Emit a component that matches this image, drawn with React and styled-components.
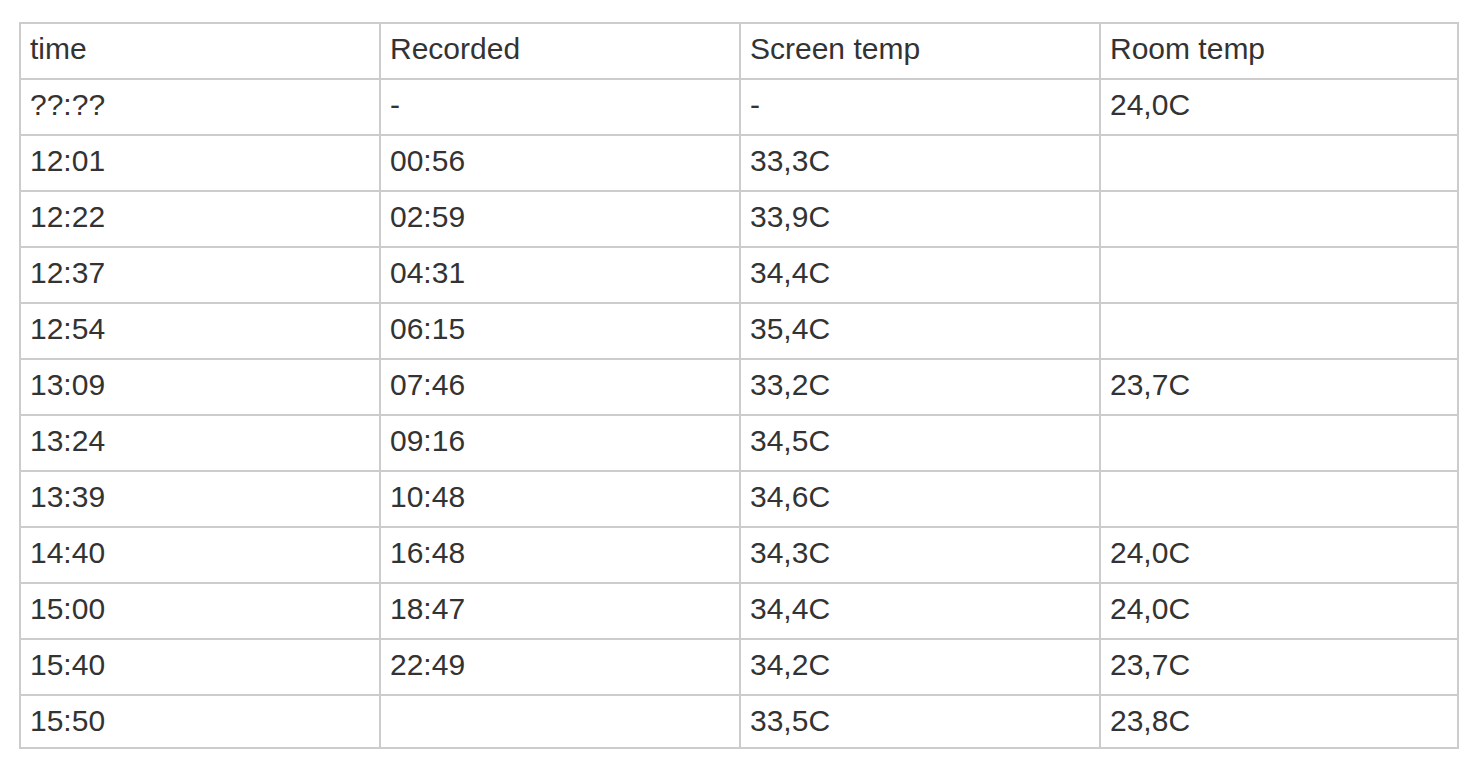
import React from 'react';
import styled, { createGlobalStyle } from 'styled-components';

const GlobalStyle = createGlobalStyle`
  html, body {
    margin: 0;
    padding: 0;
    background: #ffffff;
  }
  body {
    font-family: "Liberation Sans", Arial, sans-serif;
    color: #333333;
  }
`;

const Page = styled.div`
  padding: 22px 0 0 19px;
`;

const Table = styled.table`
  width: 1440px;
  table-layout: fixed;
  border-collapse: separate;
  border-spacing: 0;
  border-top: 2px solid #cccccc;
  border-left: 2px solid #cccccc;
  font-size: 30px;
  line-height: 36px;
`;

const HeadCell = styled.th`
  box-sizing: border-box;
  width: ${props => props.$w ? `${props.$w}px` : 'auto'};
  padding: 7px 10px 11px 9px;
  text-align: left;
  font-weight: 400;
  border-right: 2px solid #cccccc;
  border-bottom: 2px solid #cccccc;
  white-space: nowrap;
`;

const Row = styled.tr`
  &:last-child td {
    padding-bottom: 8px;
  }
`;

const Cell = styled.td`
  box-sizing: border-box;
  padding: 7px 10px 11px 9px;
  border-right: 2px solid #cccccc;
  border-bottom: 2px solid #cccccc;
  white-space: nowrap;
`;

const columns = [
  { label: 'time', w: 360 },
  { label: 'Recorded', w: 360 },
  { label: 'Screen temp', w: 360 },
  { label: 'Room temp' },
];

const rows = [
  ['??:??', '-', '-', '24,0C'],
  ['12:01', '00:56', '33,3C', ''],
  ['12:22', '02:59', '33,9C', ''],
  ['12:37', '04:31', '34,4C', ''],
  ['12:54', '06:15', '35,4C', ''],
  ['13:09', '07:46', '33,2C', '23,7C'],
  ['13:24', '09:16', '34,5C', ''],
  ['13:39', '10:48', '34,6C', ''],
  ['14:40', '16:48', '34,3C', '24,0C'],
  ['15:00', '18:47', '34,4C', '24,0C'],
  ['15:40', '22:49', '34,2C', '23,7C'],
  ['15:50', '', '33,5C', '23,8C'],
];

export default function App() {
  return (
    <Page>
      <GlobalStyle />
      <Table>
        <thead>
          <tr>
            {columns.map(col => (
              <HeadCell key={col.label} $w={col.w}>{col.label}</HeadCell>
            ))}
          </tr>
        </thead>
        <tbody>
          {rows.map((row, i) => (
            <Row key={i}>
              {row.map((value, j) => (
                <Cell key={j}>{value}</Cell>
              ))}
            </Row>
          ))}
        </tbody>
      </Table>
    </Page>
  );
}
